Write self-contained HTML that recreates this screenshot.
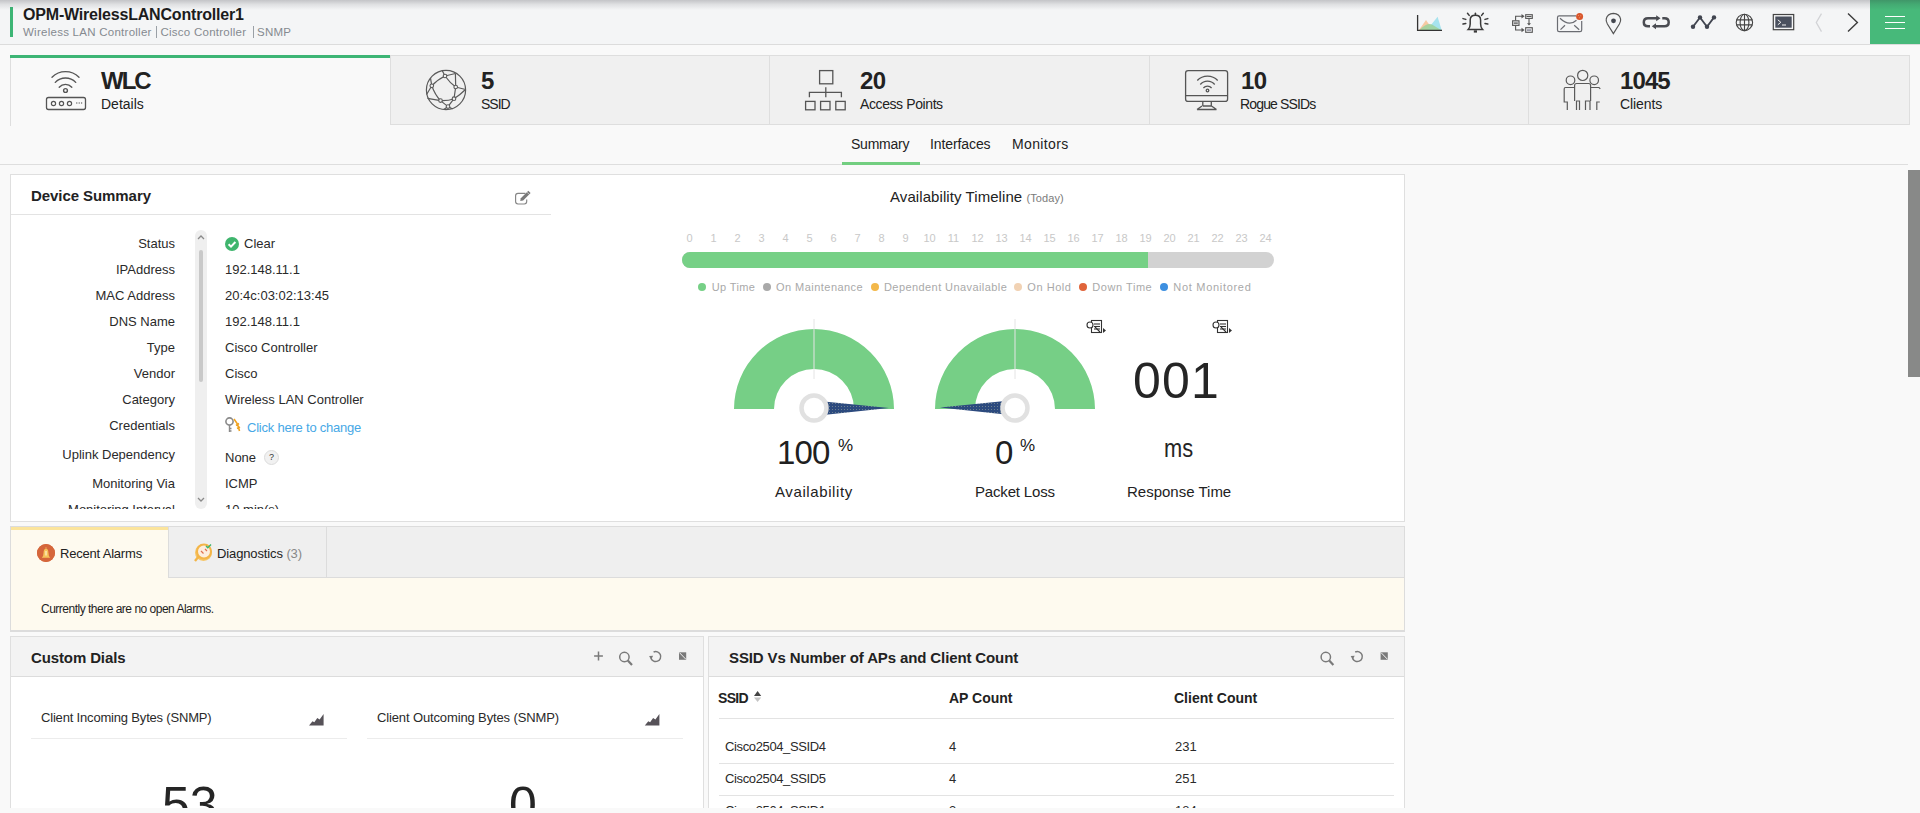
<!DOCTYPE html>
<html><head><meta charset="utf-8"><style>
*{box-sizing:border-box;margin:0;padding:0}
html,body{width:1920px;height:813px;overflow:hidden;background:#f9f9f9;font-family:"Liberation Sans",sans-serif;color:#222}
.a{position:absolute}
.t{position:absolute;white-space:nowrap;line-height:1}
svg{position:absolute;overflow:visible}
</style></head><body>

<!-- HEADER -->
<div class="a" style="left:0;top:0;width:1920px;height:45px;background:#f4f5f6;border-bottom:1px solid #dcdcdc"></div>

<div class="a" style="left:10px;top:7px;width:3px;height:30px;background:#3db575"></div>
<div class="t" style="left:23px;top:7px;font-size:16px;font-weight:700;color:#1c1c1c;letter-spacing:-0.19px">OPM-WirelessLANController1</div>
<div class="t" style="left:23px;top:27px;font-size:11.5px;color:#858a90;letter-spacing:0.26px">Wireless LAN Controller</div>
<div class="a" style="left:156px;top:26px;width:1px;height:12px;background:#9aa0a6"></div>
<div class="t" style="left:160.5px;top:27px;font-size:11.5px;color:#858a90;letter-spacing:0.25px">Cisco Controller</div>
<div class="a" style="left:252.5px;top:26px;width:1px;height:12px;background:#9aa0a6"></div>
<div class="t" style="left:257px;top:27px;font-size:11.5px;color:#858a90;letter-spacing:0.25px">SNMP</div>

<!-- menu button -->
<div class="a" style="left:1870px;top:0;width:50px;height:44px;background:#47b97a"></div>
<div class="a" style="left:1885px;top:15.9px;width:20px;height:1.4px;background:#fff"></div>
<div class="a" style="left:1885px;top:21.9px;width:20px;height:1.4px;background:#fff"></div>
<div class="a" style="left:1885px;top:27.9px;width:20px;height:1.4px;background:#fff"></div>

<div class="a" style="left:0;top:0;width:1920px;height:10px;background:linear-gradient(rgba(40,40,50,0.24),rgba(40,40,50,0.1) 45%,rgba(40,40,50,0))"></div>

<!-- BIG TABS -->
<div class="a" style="left:10px;top:55px;width:1900px;height:70px;background:#f0f0f0;border:1px solid #dedede"></div>
<div class="a" style="left:10px;top:55px;width:380px;height:71px;background:#f9f9f9;border-left:1px solid #dedede"></div>
<div class="a" style="left:10px;top:55px;width:380px;height:3px;background:#3db575"></div>
<div class="a" style="left:390px;top:55px;width:1px;height:70px;background:#dedede"></div>
<div class="a" style="left:769px;top:55px;width:1px;height:70px;background:#dedede"></div>
<div class="a" style="left:1149px;top:55px;width:1px;height:70px;background:#dedede"></div>
<div class="a" style="left:1528px;top:55px;width:1px;height:70px;background:#dedede"></div>

<div class="t" style="left:101px;top:69px;font-size:24px;font-weight:700;letter-spacing:-2px">WLC</div>
<div class="t" style="left:101px;top:97px;font-size:14px">Details</div>
<div class="t" style="left:481px;top:69px;font-size:24px;font-weight:700">5</div>
<div class="t" style="left:481px;top:97px;font-size:14px;letter-spacing:-1px">SSID</div>
<div class="t" style="left:860px;top:69px;font-size:24px;font-weight:700;letter-spacing:-0.5px">20</div>
<div class="t" style="left:860px;top:97px;font-size:14px;letter-spacing:-0.4px">Access Points</div>
<div class="t" style="left:1241px;top:69px;font-size:24px;font-weight:700;letter-spacing:-0.5px">10</div>
<div class="t" style="left:1240px;top:97px;font-size:14px;letter-spacing:-0.85px">Rogue SSIDs</div>
<div class="t" style="left:1620px;top:69px;font-size:24px;font-weight:700;letter-spacing:-0.9px">1045</div>
<div class="t" style="left:1620px;top:97px;font-size:14px;letter-spacing:-0.1px">Clients</div>


<!-- TAB ICONS -->
<svg style="left:0;top:0" width="1920" height="130">
 <g fill="none" stroke="#555" stroke-width="1.35" stroke-linecap="round">
  <path d="M52 77.2 A19.3 19.3 0 0 1 79 77.2"/>
  <path d="M55.3 82.4 A14 14 0 0 1 75.7 82.4"/>
  <path d="M59.2 87.2 A8.5 8.5 0 0 1 71.8 87.2"/>
  <circle cx="65.5" cy="90.5" r="1.9" stroke-width="1.4"/>
  <rect x="46.5" y="97.5" width="39" height="12" rx="2" stroke-width="1.3"/>
  <circle cx="53.5" cy="103.5" r="2.1" stroke-width="1.2"/>
  <circle cx="61.5" cy="103.5" r="2.1" stroke-width="1.2"/>
  <circle cx="69.5" cy="103.5" r="2.1" stroke-width="1.2"/>
 </g>
 <g fill="#666"><circle cx="76.8" cy="103" r="0.7"/><circle cx="79.2" cy="103" r="0.7"/><circle cx="81.6" cy="103" r="0.7"/></g>

 <g fill="none" stroke="#5a5a5a" stroke-width="1.2">
  <circle cx="446" cy="90" r="19.6"/>
  <path d="M442.3 70.8 L445 76 M445 76 L455.4 73.5 M455.4 73.5 L455.7 87 M445 76 Q450 83 455.7 87 M445 76 Q437 80 431.8 85.8 M430.5 78.2 L431.8 85.8 M431.8 85.8 L426.6 94.5 M431.8 85.8 Q435 95 440.5 100.6 M455.7 87 L465.5 89.5 M455.7 87 L454 98.7 M465.5 89.5 Q460 95 454 98.7 M440.5 100.6 Q448 101 454 98.7 M427.5 98.4 L440.5 100.6 M440.5 100.6 L448 106.6 M454 98.7 L448 106.6 M448 106.6 L443.8 109.5 M448 106.6 L452.6 109"/>
 </g>
 <g fill="#f0f0f0" stroke="#5a5a5a" stroke-width="1.1">
  <circle cx="445" cy="76" r="1.8"/><circle cx="431.8" cy="85.8" r="1.8"/><circle cx="455.7" cy="87" r="1.8"/>
  <circle cx="440.5" cy="100.6" r="1.8"/><circle cx="454" cy="98.7" r="1.8"/><circle cx="448" cy="106.6" r="1.8"/>
 </g>

 <g fill="none" stroke="#555" stroke-width="1.3">
  <rect x="819.6" y="70.6" width="13.2" height="13.2"/>
  <path d="M825.8 87.3 V97.3 M809.4 97.3 V92.3 H841.4 V97.3"/>
  <rect x="805.6" y="101.4" width="9.4" height="8.4"/>
  <rect x="820.6" y="101.4" width="9.4" height="8.4"/>
  <rect x="835.8" y="101.4" width="9.4" height="8.4"/>
 </g>

 <g fill="none" stroke="#555" stroke-width="1.3">
  <rect x="1185.6" y="70.6" width="42" height="30.8" rx="2.5"/>
  <path d="M1185.6 95.6 H1227.6"/>
  <path d="M1202.8 101.5 V106 M1211.3 101.5 V106 M1202.8 106 H1211.3 M1197 109.5 L1202 106 M1216.5 109.5 L1211.5 106 M1197 109.5 H1216.5"/>
  <path d="M1197.3 80.5 A14 14 0 0 1 1217.7 80.5"/>
  <path d="M1200.3 84.5 A9.5 9.5 0 0 1 1214.7 84.5"/>
  <path d="M1203.4 88 A5.5 5.5 0 0 1 1211.6 88"/>
  <circle cx="1207.5" cy="90.5" r="1.3"/>
 </g>

 <g fill="none" stroke="#5a5a5a" stroke-width="1.2">
  <circle cx="1582.7" cy="75.4" r="5.1"/>
  <circle cx="1570.5" cy="80.3" r="4.3"/>
  <circle cx="1594.2" cy="80.3" r="4.3"/>
  <path d="M1574.6 101 V85.5 Q1574.6 83.5 1576.6 83.5 H1588.6 Q1590.6 83.5 1590.6 85.5 V101"/>
  <path d="M1576.5 110 V101 H1579.5 V110 M1585.5 110 V101 H1590 V110"/>
  <path d="M1574.6 87.5 H1565.5 Q1564.2 87.5 1564.2 89 V102 H1567.3 V110"/>
  <path d="M1590.6 87.5 H1599 L1600.3 88.8 M1596.8 110 V102 H1599.8"/>
 </g>
</svg>

<!-- HEADER ICONS -->
<svg style="left:0;top:0" width="1920" height="45">
 <path d="M1419 30 L1426 20 L1433 30 Z" fill="#f6c9a2"/>
 <path d="M1427 30 L1437.6 16.8 L1441.6 30 Z" fill="#a6e3ee"/>
 <path d="M1419.5 30 Q1427 22.5 1432 24.5 L1441 30 Z" fill="#9fd29c" opacity="0.9"/>
 <path d="M1417.6 15 V30.3 H1442" fill="none" stroke="#333" stroke-width="1.3"/>

 <g fill="none" stroke="#3a3a3a" stroke-width="1.5" stroke-linecap="round">
  <path d="M1468.2 29.6 Q1470.2 27.5 1470.2 24 V20 Q1470.2 15.3 1475.4 15.3 Q1480.6 15.3 1480.6 20 V24 Q1480.6 27.5 1482.6 29.6 Z"/>
  <path d="M1475.4 13.2 V15"/>
  <path d="M1467.5 13.3 L1469.2 15.4 M1483.3 13.3 L1481.6 15.4 M1463 18.6 L1465.8 19.4 M1487.8 18.6 L1485 19.4 M1463 24.1 L1465.8 23.4 M1487.8 24.1 L1485 23.4"/>
 </g>
 <path d="M1473.8 30.3 H1477 V32.6 H1473.8 Z" fill="#3a3a3a"/>

 <g fill="none" stroke="#555" stroke-width="1.1">
  <rect x="1512.6" y="20.8" width="6.4" height="4.6" fill="#e4e5e7"/>
  <rect x="1525.7" y="14.7" width="6.6" height="3.7"/>
  <rect x="1525.7" y="27.7" width="6.6" height="4.6"/>
  <path d="M1526.5 16.5 H1531.5 M1513.8 23.1 H1517.8"/>
  <path d="M1515.6 20.5 V16.3 H1522 M1515.6 26 V30 H1522 M1529 19 V24"/>
 </g>
 <rect x="1527" y="29.2" width="4" height="1.8" fill="#9a9ba8"/>
 <path d="M1521.5 14 L1524.6 16.3 L1521.5 18.6 Z M1521.5 27.7 L1524.6 30 L1521.5 32.3 Z M1527 23.2 L1529 25.6 L1531 23.2 Z" fill="#555"/>

 <path d="M1576.2 15.8 H1559.2 Q1557.5 15.8 1557.5 17.5 V29.9 Q1557.5 31.6 1559.2 31.6 H1580 Q1581.7 31.6 1581.7 29.9 V21" fill="none" stroke="#6a6c72" stroke-width="1.2"/>
 <path d="M1560 18.3 Q1569 27 1576.5 20.2 M1560.5 29.6 L1565 25.2 M1574.2 25.2 L1579.2 29.8" fill="none" stroke="#6a6c72" stroke-width="1.2"/>
 <circle cx="1579.6" cy="16.5" r="3.5" fill="#d9562b"/>
 <g fill="#f3a07c"><circle cx="1578.4" cy="15.4" r="0.5"/><circle cx="1580.8" cy="15.8" r="0.5"/><circle cx="1579.4" cy="17.8" r="0.5"/></g>

 <path d="M1613.4 33.6 L1607.4 24 Q1605.8 21.2 1606.2 19.2 Q1607.2 13.5 1613.4 13.3 Q1619.6 13.5 1620.6 19.2 Q1621 21.2 1619.4 24 Z" fill="none" stroke="#555" stroke-width="1.2"/>
 <circle cx="1613.5" cy="20.8" r="2.4" fill="#44474f"/>

 <g fill="none" stroke="#4a4c52" stroke-width="2.5">
  <path d="M1657 18.3 H1648 Q1643.8 18.3 1643.8 22.3 Q1643.8 26.3 1648 26.3 H1650"/>
  <path d="M1654.5 26.3 H1664.5 Q1668.7 26.3 1668.7 22.3 Q1668.7 18.3 1664.5 18.3 H1662.3"/>
 </g>
 <path d="M1656.2 15.3 L1660.5 18.3 L1656.2 21.3 Z M1656 23.3 L1651.8 26.3 L1656 29.3 Z" fill="#4a4c52"/>

 <path d="M1693 26.8 L1700 17.4 L1707 26.8 L1714 17.4" fill="none" stroke="#414550" stroke-width="1.8"/>
 <g fill="#414550"><circle cx="1693" cy="26.8" r="2.2"/><circle cx="1700" cy="17.4" r="2.2"/><circle cx="1707" cy="26.8" r="2.2"/><circle cx="1714" cy="17.4" r="2.2"/></g>

 <g fill="none" stroke="#444" stroke-width="1.1">
  <circle cx="1744.4" cy="22.4" r="8.2"/>
  <ellipse cx="1744.5" cy="22.4" rx="4.4" ry="8.2"/>
  <path d="M1744.5 14.2 V30.6 M1736.6 19.9 H1752.4 M1736.6 24.9 H1752.4"/>
 </g>

 <rect x="1773.3" y="14.5" width="20.4" height="15.2" fill="#f4f5f6" stroke="#444" stroke-width="1.2"/>
 <rect x="1775.3" y="16.5" width="16.4" height="11.2" fill="#4a505e"/>
 <path d="M1777.8 19.8 L1780.8 22.3 L1777.8 24.8 M1782 25 H1786" fill="none" stroke="#f0f0f0" stroke-width="1"/>

 <path d="M1821.5 13.6 L1816.3 22.5 L1821.5 31.6" fill="none" stroke="#d2d3d6" stroke-width="1.3"/>
 <path d="M1848 13.4 L1857.4 22.4 L1848 31.6" fill="none" stroke="#3c3c3c" stroke-width="1.4"/>
</svg>

<!-- SUBNAV -->
<div class="a" style="left:0;top:164px;width:1908px;height:1px;background:#dedede"></div>
<div class="t" style="left:851px;top:137px;font-size:14px;letter-spacing:-0.23px">Summary</div>
<div class="t" style="left:930px;top:137px;font-size:14px;letter-spacing:-0.1px">Interfaces</div>
<div class="t" style="left:1012px;top:137px;font-size:14px;letter-spacing:0.37px">Monitors</div>
<div class="a" style="left:842px;top:162px;width:78px;height:3px;background:#72ce80"></div>

<!-- page scrollbar -->
<div class="a" style="left:1908px;top:170px;width:12px;height:207px;background:#888988"></div>

<!-- DEVICE SUMMARY PANEL -->
<div class="a" style="left:10px;top:174px;width:1395px;height:348px;background:#fff;border:1px solid #dfdfdf"></div>
<div class="t" style="left:31px;top:188px;font-size:15px;font-weight:700;letter-spacing:-0.07px">Device Summary</div>
<div class="a" style="left:11px;top:214px;width:540px;height:1px;background:#e3e3e3"></div>

<!-- list -->
<div class="a" style="left:11px;top:230px;width:540px;height:279px;overflow:hidden">
 <div style="position:absolute;left:0;top:0;width:164px;text-align:right;font-size:13px;line-height:1;color:#2a2a2a">
  <div class="t" style="right:0;top:7px">Status</div>
  <div class="t" style="right:0;top:33px">IPAddress</div>
  <div class="t" style="right:0;top:59px">MAC Address</div>
  <div class="t" style="right:0;top:85px">DNS Name</div>
  <div class="t" style="right:0;top:111px">Type</div>
  <div class="t" style="right:0;top:137px">Vendor</div>
  <div class="t" style="right:0;top:163px">Category</div>
  <div class="t" style="right:0;top:189px">Credentials</div>
  <div class="t" style="right:0;top:218px">Uplink Dependency</div>
  <div class="t" style="right:0;top:247px">Monitoring Via</div>
  <div class="t" style="right:0;top:273px">Monitoring Interval</div>
 </div>
 <div style="position:absolute;left:214px;top:0;font-size:13px;line-height:1;color:#2a2a2a">
  <div class="a" style="left:0;top:7px;width:14px;height:14px;border-radius:50%;background:#3fb56d"></div>
  <svg style="left:0;top:7px" width="14" height="14"><path d="M3.6 7.2 L6 9.6 L10.4 5" fill="none" stroke="#fff" stroke-width="2"/></svg>
  <div class="t" style="left:19px;top:7px">Clear</div>
  <div class="t" style="left:0;top:33px">192.148.11.1</div>
  <div class="t" style="left:0;top:59px">20:4c:03:02:13:45</div>
  <div class="t" style="left:0;top:85px">192.148.11.1</div>
  <div class="t" style="left:0;top:111px">Cisco Controller</div>
  <div class="t" style="left:0;top:137px">Cisco</div>
  <div class="t" style="left:0;top:163px">Wireless LAN Controller</div>
  <div class="t" style="left:22px;top:191px;color:#47a8e6;letter-spacing:-0.22px">Click here to change</div>
  <div class="t" style="left:0;top:221px">None</div>
  <div class="a" style="left:39px;top:220px;width:15px;height:15px;border-radius:50%;background:#f1f1f1;border:1px solid #dcdcdc;font-size:9px;line-height:13px;text-align:center;color:#333">?</div>
  <div class="t" style="left:0;top:247px">ICMP</div>
  <div class="t" style="left:0;top:273px">10 min(s)</div>
 </div>
 <!-- inner scrollbar -->
 <div class="a" style="left:184px;top:0;width:12px;height:279px;border-radius:6px;background:#efefef"></div>
 <div class="a" style="left:188px;top:20px;width:4px;height:132px;border-radius:2px;background:#c9c9c9"></div>
 <svg style="left:186px;top:4px" width="8" height="6"><path d="M1 5 L4 2 L7 5" fill="none" stroke="#8a8a8a" stroke-width="1.3"/></svg>
 <svg style="left:186px;top:267px" width="8" height="6"><path d="M1 1 L4 4 L7 1" fill="none" stroke="#8a8a8a" stroke-width="1.3"/></svg>
</div>

<!-- Availability timeline -->
<div class="t" style="left:890px;top:189px;font-size:15px;color:#222;letter-spacing:0.08px">Availability Timeline <span style="font-size:11px;color:#7b7b7b">(Today)</span></div>
<div id="hrs" class="a" style="left:0;top:233px;font-size:11px;line-height:1;color:#c8c8c8"><div class="t" style="left:689.5px;top:0;transform:translateX(-50%)">0</div><div class="t" style="left:713.5px;top:0;transform:translateX(-50%)">1</div><div class="t" style="left:737.5px;top:0;transform:translateX(-50%)">2</div><div class="t" style="left:761.5px;top:0;transform:translateX(-50%)">3</div><div class="t" style="left:785.5px;top:0;transform:translateX(-50%)">4</div><div class="t" style="left:809.5px;top:0;transform:translateX(-50%)">5</div><div class="t" style="left:833.5px;top:0;transform:translateX(-50%)">6</div><div class="t" style="left:857.5px;top:0;transform:translateX(-50%)">7</div><div class="t" style="left:881.5px;top:0;transform:translateX(-50%)">8</div><div class="t" style="left:905.5px;top:0;transform:translateX(-50%)">9</div><div class="t" style="left:929.5px;top:0;transform:translateX(-50%)">10</div><div class="t" style="left:953.5px;top:0;transform:translateX(-50%)">11</div><div class="t" style="left:977.5px;top:0;transform:translateX(-50%)">12</div><div class="t" style="left:1001.5px;top:0;transform:translateX(-50%)">13</div><div class="t" style="left:1025.5px;top:0;transform:translateX(-50%)">14</div><div class="t" style="left:1049.5px;top:0;transform:translateX(-50%)">15</div><div class="t" style="left:1073.5px;top:0;transform:translateX(-50%)">16</div><div class="t" style="left:1097.5px;top:0;transform:translateX(-50%)">17</div><div class="t" style="left:1121.5px;top:0;transform:translateX(-50%)">18</div><div class="t" style="left:1145.5px;top:0;transform:translateX(-50%)">19</div><div class="t" style="left:1169.5px;top:0;transform:translateX(-50%)">20</div><div class="t" style="left:1193.5px;top:0;transform:translateX(-50%)">21</div><div class="t" style="left:1217.5px;top:0;transform:translateX(-50%)">22</div><div class="t" style="left:1241.5px;top:0;transform:translateX(-50%)">23</div><div class="t" style="left:1265.5px;top:0;transform:translateX(-50%)">24</div></div>
<div class="a" style="left:682px;top:252px;width:592px;height:16px;border-radius:8px;background:#d2d2d2;overflow:hidden">
  <div class="a" style="left:0;top:0;width:466px;height:16px;background:#76d086"></div>
</div>
<div class="a" style="left:697.7px;top:283px;width:8px;height:8px;border-radius:50%;background:#76d086"></div>
<div class="t" style="left:711.7px;top:282px;font-size:11px;color:#a9a9a9;letter-spacing:0.39px">Up Time</div>
<div class="a" style="left:762.7px;top:283px;width:8px;height:8px;border-radius:50%;background:#a9a9a9"></div>
<div class="t" style="left:776.0px;top:282px;font-size:11px;color:#a9a9a9;letter-spacing:0.46px">On Maintenance</div>
<div class="a" style="left:871.0px;top:283px;width:8px;height:8px;border-radius:50%;background:#f3b84a"></div>
<div class="t" style="left:884.0px;top:282px;font-size:11px;color:#a9a9a9;letter-spacing:0.42px">Dependent Unavailable</div>
<div class="a" style="left:1013.7px;top:283px;width:8px;height:8px;border-radius:50%;background:#f1d2b4"></div>
<div class="t" style="left:1027.3px;top:282px;font-size:11px;color:#a9a9a9;letter-spacing:0.55px">On Hold</div>
<div class="a" style="left:1078.7px;top:283px;width:8px;height:8px;border-radius:50%;background:#e0643a"></div>
<div class="t" style="left:1092.3px;top:282px;font-size:11px;color:#a9a9a9;letter-spacing:0.55px">Down Time</div>
<div class="a" style="left:1160.0px;top:283px;width:8px;height:8px;border-radius:50%;background:#3d8fe0"></div>
<div class="t" style="left:1173.3px;top:282px;font-size:11px;color:#a9a9a9;letter-spacing:0.7px">Not Monitored</div>

<svg style="left:0;top:0" width="1920" height="813">
 <defs>
  <pattern id="dots" width="3" height="3" patternUnits="userSpaceOnUse"><rect width="3" height="3" fill="#2c4a7e"/><rect x="1" y="1" width="1" height="1" fill="#6d7f8f"/></pattern>
 </defs>
 <path d="M734 409 A80 80 0 0 1 894 409 L854 409 A40 40 0 0 0 774 409 Z" fill="#76cf86"/>
 <line x1="814" y1="319" x2="814" y2="379" stroke="#e4e4e4" stroke-width="1"/>
 <path d="M814 400.5 L889 408 L814 416 Z" fill="url(#dots)"/>
 <circle cx="814" cy="408" r="12.5" fill="#fff" stroke="#e1e1e1" stroke-width="4.5"/>
 <path d="M935 409 A80 80 0 0 1 1095 409 L1055 409 A40 40 0 0 0 975 409 Z" fill="#76cf86"/>
 <line x1="1015" y1="319" x2="1015" y2="379" stroke="#e4e4e4" stroke-width="1"/>
 <path d="M1015 400 L940 407.5 L1015 415.5 Z" fill="url(#dots)"/>
 <circle cx="1015" cy="408" r="12.5" fill="#fff" stroke="#e1e1e1" stroke-width="4.5"/>
 <!-- report icons -->
 <g fill="none" stroke="#333" stroke-width="1.1">
  <rect x="1091.5" y="320.5" width="10" height="12"/>
  <line x1="1094" y1="324" x2="1100" y2="324"/><line x1="1094" y1="326.5" x2="1100" y2="326.5"/><line x1="1094" y1="329" x2="1100" y2="329"/>
  <circle cx="1090" cy="325" r="3" fill="#fff"/>
  <line x1="1095" y1="327" x2="1100" y2="332"/>
 </g>
 <path d="M1103 328 L1106 330.5 L1103 333 Z" fill="#333"/>
 <g fill="none" stroke="#333" stroke-width="1.1">
  <rect x="1217.5" y="320.5" width="10" height="12"/>
  <line x1="1220" y1="324" x2="1226" y2="324"/><line x1="1220" y1="326.5" x2="1226" y2="326.5"/><line x1="1220" y1="329" x2="1226" y2="329"/>
  <circle cx="1216" cy="325" r="3" fill="#fff"/>
  <line x1="1221" y1="327" x2="1226" y2="332"/>
 </g>
 <path d="M1229 328 L1232 330.5 L1229 333 Z" fill="#333"/>
</svg>
<div class="t" style="left:777px;top:436px;font-size:33px;letter-spacing:-0.8px;color:#202020">100</div>
<div class="t" style="left:838px;top:437px;font-size:17px;color:#202020">%</div>
<div class="t" style="left:995px;top:436px;font-size:33px;color:#202020">0</div>
<div class="t" style="left:1020px;top:437px;font-size:17px;color:#202020">%</div>
<div class="t" style="left:1133px;top:356px;font-size:50px;letter-spacing:1.2px;color:#252525">001</div>
<div class="t" style="left:1164px;top:435px;font-size:26px;color:#252525;transform:scaleX(0.84);transform-origin:0 0">ms</div>
<div class="t" style="left:775px;top:484px;font-size:15px;letter-spacing:0.6px;color:#222">Availability</div>
<div class="t" style="left:975px;top:484px;font-size:15px;letter-spacing:-0.17px;color:#222">Packet Loss</div>
<div class="t" style="left:1127px;top:484px;font-size:15px;color:#222">Response Time</div>

<!-- ALARMS -->
<div class="a" style="left:10px;top:526px;width:1395px;height:106px;background:#fefaef;border:1px solid #dcdcdc;border-bottom-width:2px"></div>
<div class="a" style="left:11px;top:527px;width:1393px;height:51px;background:#efefef"></div>
<div class="a" style="left:11px;top:527px;width:157px;height:51px;background:#fefaef"></div>
<div class="a" style="left:11px;top:527px;width:157px;height:3px;background:#fbe49c"></div>
<div class="a" style="left:168px;top:527px;width:1px;height:51px;background:#dcdcdc"></div>
<div class="a" style="left:168px;top:577px;width:1236px;height:1px;background:#dcdcdc"></div>
<div class="a" style="left:326px;top:527px;width:1px;height:51px;background:#dcdcdc"></div>
<div class="a" style="left:37px;top:544px;width:18px;height:18px;border-radius:50%;background:#d5643a"></div>
<div class="t" style="left:60px;top:547px;font-size:13px;letter-spacing:-0.2px">Recent Alarms</div>
<div class="a" style="left:195px;top:544px;width:17px;height:17px;border-radius:50%;background:#f6c565"></div>
<div class="t" style="left:217px;top:547px;font-size:13px;letter-spacing:-0.12px">Diagnostics <span style="color:#888">(3)</span></div>
<div class="t" style="left:41px;top:603px;font-size:12px;letter-spacing:-0.5px;color:#1e1e1e">Currently there are no open Alarms.</div>

<!-- CUSTOM DIALS -->
<div class="a" style="left:10px;top:636px;width:694px;height:180px;background:#fff;border:1px solid #dfdfdf"></div>
<div class="a" style="left:11px;top:637px;width:692px;height:40px;background:#f3f3f3;border-bottom:1px solid #dcdcdc"></div>
<div class="t" style="left:31px;top:650px;font-size:15px;font-weight:700;letter-spacing:-0.12px">Custom Dials</div>
<div class="t" style="left:41px;top:711px;font-size:13px;letter-spacing:-0.18px;color:#2a2a2a">Client Incoming Bytes (SNMP)</div>
<div class="a" style="left:31px;top:738px;width:316px;height:1px;background:#ececec"></div>
<div class="t" style="left:377px;top:711px;font-size:13px;letter-spacing:-0.13px;color:#2a2a2a">Client Outcoming Bytes (SNMP)</div>
<div class="a" style="left:367px;top:738px;width:316px;height:1px;background:#ececec"></div>
<div class="t" style="left:162px;top:780px;font-size:50px;color:#252525">53</div>
<div class="t" style="left:509px;top:780px;font-size:50px;color:#252525">0</div>

<!-- SSID TABLE -->
<div class="a" style="left:708px;top:636px;width:697px;height:180px;background:#fff;border:1px solid #dfdfdf"></div>
<div class="a" style="left:709px;top:637px;width:695px;height:40px;background:#f3f3f3;border-bottom:1px solid #dcdcdc"></div>
<div class="t" style="left:729px;top:650px;font-size:15px;font-weight:700;letter-spacing:-0.12px">SSID Vs Number of APs and Client Count</div>
<div class="t" style="left:718px;top:691px;font-size:14px;font-weight:700;letter-spacing:-0.7px">SSID</div>
<div class="t" style="left:949px;top:691px;font-size:14px;font-weight:700">AP Count</div>
<div class="t" style="left:1174px;top:691px;font-size:14px;font-weight:700">Client Count</div>
<div class="a" style="left:719px;top:718px;width:675px;height:1px;background:#e3e3e3"></div>
<div class="t" style="left:725px;top:740px;font-size:13px;letter-spacing:-0.37px;color:#2a2a2a">Cisco2504_SSID4</div>
<div class="t" style="left:949px;top:740px;font-size:13px;color:#2a2a2a">4</div>
<div class="t" style="left:1175px;top:740px;font-size:13px;color:#2a2a2a">231</div>
<div class="a" style="left:719px;top:763px;width:675px;height:1px;background:#e3e3e3"></div>
<div class="t" style="left:725px;top:772px;font-size:13px;letter-spacing:-0.37px;color:#2a2a2a">Cisco2504_SSID5</div>
<div class="t" style="left:949px;top:772px;font-size:13px;color:#2a2a2a">4</div>
<div class="t" style="left:1175px;top:772px;font-size:13px;color:#2a2a2a">251</div>
<div class="a" style="left:719px;top:795px;width:675px;height:1px;background:#e3e3e3"></div>
<div class="t" style="left:725px;top:804px;font-size:13px;letter-spacing:-0.37px;color:#2a2a2a">Cisco2504_SSID1</div>
<div class="t" style="left:949px;top:804px;font-size:13px;color:#2a2a2a">3</div>
<div class="t" style="left:1175px;top:804px;font-size:13px;color:#2a2a2a">184</div>


<!-- PANEL ICONS -->
<svg style="left:0;top:0" width="1920" height="813">
 <path d="M525.5 193.3 H518 Q515.6 193.3 515.6 195.7 V201.6 Q515.6 204 518 204 H524.3 Q526.7 204 526.7 201.6 V199.5" fill="none" stroke="#858585" stroke-width="1.15"/>
 <path d="M520.2 201 L520.8 198.3 L528.3 190.8 L530.6 193.1 L523.1 200.6 Z" fill="#7a7a7a"/>
 <path d="M527 192.2 L529.2 194.4" stroke="#fff" stroke-width="0.6"/>

 <!-- key icon -->
 <g>
  <circle cx="229.5" cy="421.5" r="3.6" fill="none" stroke="#8a8a8a" stroke-width="1.6"/>
  <path d="M229.5 425 V432 M229.5 428.5 H231.5 M229.5 431 H231.5" stroke="#8a8a8a" stroke-width="1.4"/>
  <path d="M234 419 L237.5 424 L239.5 431 M236 425.5 L239 423.5 M237 428.5 L240 427" stroke="#f0a21e" stroke-width="1.6" fill="none"/>
 </g>

 <!-- custom dials header icons -->
 <g stroke="#7a7a7a" fill="none">
  <path d="M598.5 651.6 V660.4 M594.1 656 H602.9" stroke-width="1.5"/>
  <circle cx="624.4" cy="657" r="4.7" stroke-width="1.5"/>
  <path d="M627.8 660.6 L632 665" stroke-width="2.2"/>
  
  <path d="M1322.4 657 m0 0" />
 </g>
 <path d="M653.59 651.97 A5.0 5.0 0 1 1 651.00 658.21" fill="none" stroke="#7a7a7a" stroke-width="1.5"/><path d="M649.10 655.90 L653.10 655.70 L651.10 659.70 Z" fill="#7a7a7a"/>
 <path d="M679 652.3 H686.2 V659.8 H679 Z" fill="#7a7a7a"/>
 <path d="M679.4 652.6 L686 659.4" stroke="#f2f2f2" stroke-width="1"/>

 <!-- ssid header icons -->
 <g stroke="#7a7a7a" fill="none">
  <circle cx="1325.8" cy="657" r="4.7" stroke-width="1.5"/>
  <path d="M1329.2 660.6 L1333.4 665" stroke-width="2.2"/>
  
 </g>
 <path d="M1355.19 651.97 A5.0 5.0 0 1 1 1352.60 658.21" fill="none" stroke="#7a7a7a" stroke-width="1.5"/><path d="M1350.70 655.90 L1354.70 655.70 L1352.70 659.70 Z" fill="#7a7a7a"/>
 <path d="M1380.6 652.3 H1387.8 V659.8 H1380.6 Z" fill="#7a7a7a"/>
 <path d="M1381 652.6 L1387.6 659.4" stroke="#f2f2f2" stroke-width="1"/>

 <!-- chart icons -->
 <path d="M309.0 725.4 L312.5 721.3 L314.3 722.3 L317.3 718.1 L319.6 719.6 L323.6 714.1 L323.6 725.4 Z" fill="#565258"/>
 <path d="M644.8 725.4 L648.3 721.3 L650.1 722.3 L653.1 718.1 L655.4 719.6 L659.4 714.1 L659.4 725.4 Z" fill="#565258"/>

 <!-- sort arrows -->
 <path d="M754 696 L757.6 691 L761.2 696 Z" fill="#444"/>
 <path d="M754 697.5 L757.6 702 L761.2 697.5 Z" fill="#c4c4c4"/>

 <!-- alarm icon -->
 <circle cx="46" cy="553" r="9" fill="#d5663b"/>
 <path d="M41.8 557.8 Q43.6 556 43.6 552.5 Q43.6 549 46 548.5 Q48.4 549 48.4 552.5 Q48.4 556 50.2 557.8 Z" fill="#f6c45c"/>
 <path d="M45.6 547.3 H46.4 V548.6 H45.6 Z" fill="#f6c45c"/>
 <path d="M46 551 V555.5" stroke="#fff6d8" stroke-width="1.1"/>

 <!-- diagnostics icon -->
 <circle cx="204" cy="551.5" r="7" fill="#fdeede" stroke="#f3b548" stroke-width="2"/>
 <path d="M198.6 556.5 L195 561" stroke="#f3b548" stroke-width="2.4"/>
 <path d="M201 551 L203.5 553.5 M205 549 L207 551" stroke="#e07050" stroke-width="1.2"/>
 <path d="M206 546 L207.8 547.8 L211 544.4" stroke="#3fb56d" stroke-width="1.4" fill="none"/>
</svg>

<!-- bottom clip strip -->
<div class="a" style="left:0;top:808px;width:1920px;height:5px;background:#f9f9f9"></div>
</body></html>
